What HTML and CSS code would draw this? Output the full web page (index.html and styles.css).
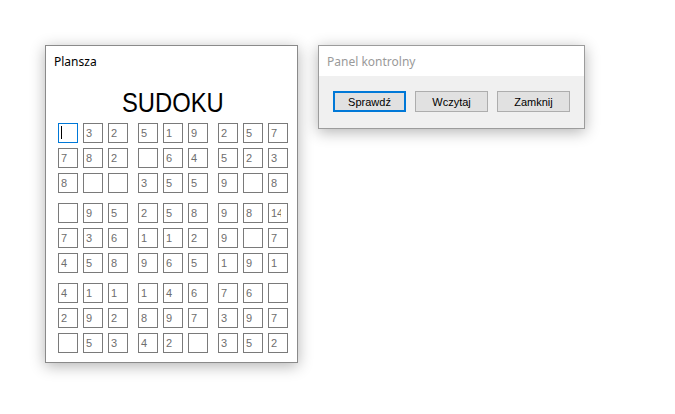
FILE: index.html
```html
<!DOCTYPE html>
<html lang="pl">
<head>
<meta charset="utf-8">
<title>Sudoku</title>
<link rel="stylesheet" href="styles.css">
</head>
<body>
<div class="desktop">
  <section class="window board">
    <header class="titlebar"><span class="title active">Plansza</span></header>
    <div class="board-body">
      <div class="heading"><span class="heading-text">SUDOKU</span></div>
      <div class="grid">
        <div class="block">
          <div class="cell focused"><span class="caret"></span></div><div class="cell">3</div><div class="cell">2</div>
          <div class="cell">7</div><div class="cell">8</div><div class="cell">2</div>
          <div class="cell">8</div><div class="cell"></div><div class="cell"></div>
        </div>
        <div class="block">
          <div class="cell">5</div><div class="cell">1</div><div class="cell">9</div>
          <div class="cell"></div><div class="cell">6</div><div class="cell">4</div>
          <div class="cell">3</div><div class="cell">5</div><div class="cell">5</div>
        </div>
        <div class="block">
          <div class="cell">2</div><div class="cell">5</div><div class="cell">7</div>
          <div class="cell">5</div><div class="cell">2</div><div class="cell">3</div>
          <div class="cell">9</div><div class="cell"></div><div class="cell">8</div>
        </div>
        <div class="block">
          <div class="cell"></div><div class="cell">9</div><div class="cell">5</div>
          <div class="cell">7</div><div class="cell">3</div><div class="cell">6</div>
          <div class="cell">4</div><div class="cell">5</div><div class="cell">8</div>
        </div>
        <div class="block">
          <div class="cell">2</div><div class="cell">5</div><div class="cell">8</div>
          <div class="cell">1</div><div class="cell">1</div><div class="cell">2</div>
          <div class="cell">9</div><div class="cell">6</div><div class="cell">5</div>
        </div>
        <div class="block">
          <div class="cell">9</div><div class="cell">8</div><div class="cell"><span class="val">14</span></div>
          <div class="cell">9</div><div class="cell"></div><div class="cell">7</div>
          <div class="cell">1</div><div class="cell">9</div><div class="cell">1</div>
        </div>
        <div class="block">
          <div class="cell">4</div><div class="cell">1</div><div class="cell">1</div>
          <div class="cell">2</div><div class="cell">9</div><div class="cell">2</div>
          <div class="cell"></div><div class="cell">5</div><div class="cell">3</div>
        </div>
        <div class="block">
          <div class="cell">1</div><div class="cell">4</div><div class="cell">6</div>
          <div class="cell">8</div><div class="cell">9</div><div class="cell">7</div>
          <div class="cell">4</div><div class="cell">2</div><div class="cell"></div>
        </div>
        <div class="block">
          <div class="cell">7</div><div class="cell">6</div><div class="cell"></div>
          <div class="cell">3</div><div class="cell">9</div><div class="cell">7</div>
          <div class="cell">3</div><div class="cell">5</div><div class="cell">2</div>
        </div>
      </div>
    </div>
  </section>
  <section class="window panel">
    <header class="titlebar"><span class="title inactive">Panel kontrolny</span></header>
    <div class="panel-body">
      <button class="btn default" type="button">Sprawdź</button>
      <button class="btn" type="button">Wczytaj</button>
      <button class="btn" type="button">Zamknij</button>
    </div>
  </section>
</div>
</body>
</html>
```
FILE: styles.css
```css
html, body {
  margin: 0;
  padding: 0;
  background: #ffffff;
}
body {
  width: 675px;
  height: 414px;
  overflow: hidden;
  font-family: "Liberation Sans", Arial, sans-serif;
}
.desktop {
  display: flex;
  align-items: flex-start;
  gap: 20px;
  padding: 45px 0 0 45px;
}
.window {
  background: #ffffff;
  border: 1px solid #8a8a8a;
  box-shadow: 0 3px 14px rgba(0, 0, 0, 0.3);
  box-sizing: border-box;
}
.titlebar {
  height: 30px;
  display: flex;
  align-items: center;
  padding-left: 8px;
  background: #ffffff;
}
.title {
  font-family: "Noto Sans", "Open Sans", sans-serif;
  font-size: 12px;
  line-height: 16px;
  padding-top: 2px;
}
.title.active { color: #000000; }
.title.inactive { color: #9a9a9a; }

.board {
  width: 253px;
  height: 318px;
}
.board-body {
  padding: 0 0 0 12px;
}
.heading {
  width: 230px;
  margin-top: 11px;
  height: 32px;
  display: flex;
  justify-content: center;
}
.heading-text {
  display: inline-block;
  font-size: 28px;
  line-height: 32px;
  color: #000;
  transform: scaleX(0.85);
}
.grid {
  margin-top: 4px;
  display: grid;
  grid-template-columns: repeat(3, 70px);
  gap: 10px;
}
.block {
  display: grid;
  grid-template-columns: repeat(3, 20px);
  grid-auto-rows: 20px;
  gap: 5px;
}
.cell {
  box-sizing: border-box;
  width: 20px;
  height: 20px;
  border: 1px solid #7a7a7a;
  padding: 0 0 0 2px;
  font-size: 11px;
  line-height: 18px;
  color: #6e6e6e;
  overflow: hidden;
  white-space: nowrap;
  position: relative;
}
.val {
  display: block;
  width: 10px;
  overflow: hidden;
}
.cell.focused {
  border-color: #0078d7;
}
.caret {
  position: absolute;
  left: 2px;
  top: 2px;
  width: 1px;
  height: 13px;
  background: #000;
}

.panel {
  width: 267px;
  height: 84px;
  border-color: #9c9c9c;
}
.panel-body {
  background: #f0f0f0;
  height: 52px;
  display: flex;
  gap: 9px;
  padding: 15px 0 0 14px;
  box-sizing: border-box;
}
.btn {
  box-sizing: border-box;
  width: 73px;
  height: 21px;
  margin: 0;
  padding: 0;
  background: #e1e1e1;
  border: 1px solid #adadad;
  font-family: "Liberation Sans", Arial, sans-serif;
  font-size: 11px;
  color: #000;
}
.btn.default {
  border: 2px solid #0078d7;
}
```
